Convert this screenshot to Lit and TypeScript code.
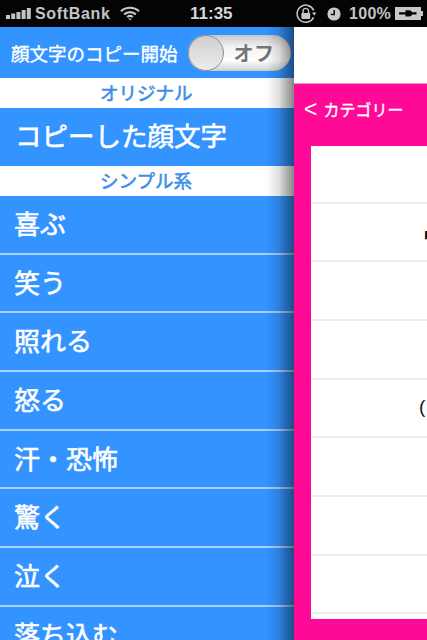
import { LitElement, html, css } from "lit";
import { customElement } from "lit/decorators.js";

const FONT = css`"Noto Sans CJK JP", "Liberation Sans", sans-serif`;

@customElement("app-root")
export class AppRoot extends LitElement {
  static styles = css`
    :host { display: block; width: 427px; height: 640px; overflow: hidden; background: #000; font-family: "Liberation Sans", ${FONT}; }
    .status { height: 27px; background: #040404; display: flex; align-items: center; color: #c4c4c4; font-weight: 700; position: relative; }
    .left-status { display: flex; align-items: center; padding-left: 6px; width: 190px; box-sizing: border-box; }
    .carrier { font-size: 16px; margin-left: 4px; letter-spacing: 0.65px; }
    .wifi { margin-left: 10px; }
    .time { font-size: 17px; width: 105px; color: #d6d6d6; }
    .right-status { display: flex; align-items: center; }
    .clock { margin-left: 10px; }
    .pct { font-size: 16px; margin-left: 8px; letter-spacing: 0.3px; }
    .batt { margin-left: 4px; }
    .main { display: flex; height: 613px; position: relative; }
    .side { width: 294px; flex: none; background: #3393ff; position: relative; overflow: hidden; font-family: ${FONT}; }
    .shade { position: absolute; top: 0; right: 0; bottom: 0; width: 28px; background: linear-gradient(to right, rgba(0,0,0,0), rgba(0,0,0,0.12) 45%, rgba(0,0,0,0.48)); }
    .head { height: 51px; display: flex; align-items: center; padding-left: 11px; color: #fff; font-size: 18.5px; font-weight: 400; -webkit-text-stroke: 0.4px #fff; gap: 10px; white-space: nowrap; }
    .toggle { width: 103px; height: 36px; flex: none; box-sizing: border-box; border-radius: 18px; background: linear-gradient(#c9c9c9, #f4f4f4 35%, #fff 70%, #cfcfcf); display: flex; align-items: center; box-shadow: inset 0 0 1px #888; -webkit-text-stroke: 0; }
    .knob { width: 36px; height: 36px; flex: none; box-sizing: border-box; border-radius: 50%; border: 1px solid #8f8f8f; background: linear-gradient(#cfcfcf, #ececec); }
    .off { color: #757575; font-size: 20px; font-weight: 700; margin-left: 10px; letter-spacing: 0.5px; }
    .section { height: 30px; background: #fff; color: #3a8fe8; font-size: 18.5px; font-weight: 400; -webkit-text-stroke: 0.55px #3a8fe8; line-height: 29px; padding-left: 100px; white-space: nowrap; }
    .copied { height: 58px; padding-left: 15px; color: #fff; font-size: 26.5px; font-weight: 400; -webkit-text-stroke: 0.6px #fff; line-height: 54px; white-space: nowrap; }
    .cat { height: 58.67px; box-sizing: border-box; padding-left: 14px; border-bottom: 2px solid #a9d1fc; color: #fff; font-size: 26px; font-weight: 400; -webkit-text-stroke: 0.6px #fff; line-height: 54px; white-space: nowrap; }
    .panel { flex: 1; background: #fff; min-width: 0; display: flex; flex-direction: column; }
    .top { height: 57px; box-sizing: border-box; border-bottom: 1px solid #d8a0c4; flex: none; }
    .pink { flex: 1; background: #ff0a96; display: flex; flex-direction: column; font-family: ${FONT}; min-height: 0; }
    .back { height: 62px; flex: none; box-sizing: border-box; padding: 12px 0 0 10px; color: #fff; font-size: 16px; font-weight: 400; -webkit-text-stroke: 0.35px #fff; line-height: 26px; white-space: nowrap; display: flex; gap: 6px; }
    .chev { font-size: 23px; font-weight: 400; font-family: "Liberation Sans", sans-serif; line-height: 26px; -webkit-text-stroke: 0; }
    .card { height: 473px; flex: none; margin-left: 17px; background: #fff; overflow: hidden; }
    .row { height: 58.67px; box-sizing: border-box; border-bottom: 2px solid #ececec; white-space: nowrap; color: #111; overflow: hidden; }
    .row:first-child { height: 57.67px; }
    .dark { font-family: "DejaVu Sans", sans-serif; font-size: 11px; line-height: 62px; padding-left: 113px; color: #111; }
    .paren { font-family: "Liberation Sans", sans-serif; font-size: 19px; line-height: 54px; padding-left: 108px; }
  `;

  render() {
    const cats = ["喜ぶ", "笑う", "照れる", "怒る", "汗・恐怖", "驚く", "泣く", "落ち込む"];
    return html`
      <div class="status">
        <div class="left-status">
          <svg width="25" height="12" viewBox="0 0 25 12" fill="#c4c4c4">
            <rect x="0" y="7" width="4" height="4"/><rect x="5.2" y="5.5" width="4" height="5.5"/><rect x="10.4" y="4" width="4" height="7"/><rect x="15.6" y="2" width="4" height="9"/><rect x="20.8" y="0" width="4" height="11"/>
          </svg>
          <span class="carrier">SoftBank</span>
          <svg class="wifi" width="20" height="15" viewBox="0 0 20 15" fill="none" stroke="#c8c8c8" stroke-width="2.2">
            <path d="M1 5.2C6 .6 14 .6 19 5.2"/><path d="M4.2 8.4c3.3-3 8.3-3 11.6 0"/><path d="M7.2 11c1.7-1.4 3.9-1.4 5.6 0"/><path d="M10 14.6l-1.8-2.2h3.6z" fill="#c8c8c8" stroke="none"/>
          </svg>
        </div>
        <span class="time">11:35</span>
        <div class="right-status">
          <svg width="22" height="22" viewBox="0 0 22 22" fill="none">
            <path d="M18.6 14.2A8.6 8.6 0 1 1 18.7 7.5" stroke="#c8c8c8" stroke-width="1.5"/>
            <path d="M17 9.5h4.4l-2.2 3z" fill="#c8c8c8"/>
            <path d="M8 10V8.2a2.8 2.8 0 0 1 5.6 0V10" stroke="#c8c8c8" stroke-width="1.4"/>
            <rect x="6.4" y="10" width="8.8" height="6" rx="0.8" fill="#c8c8c8"/>
          </svg>
          <svg class="clock" width="14" height="14" viewBox="0 0 14 14">
            <circle cx="7" cy="7" r="6.6" fill="#c8c8c8"/><path d="M7.2 3v4.4H3.8" fill="none" stroke="#040404" stroke-width="1.5"/>
          </svg>
          <span class="pct">100%</span>
          <svg class="batt" width="28" height="13" viewBox="0 0 28 13">
            <rect x="0" y="0" width="26" height="13" fill="#c8c8c8"/><rect x="26" y="4" width="2" height="5" fill="#c8c8c8"/>
            <path d="M4 5.2h6.5V3.2h3.6c1.6 0 2.6 1 3 2h4.4v2.4h-4.4c-.4 1-1.4 2-3 2h-3.6v-2H4z" fill="#040404"/>
          </svg>
        </div>
      </div>
      <div class="main">
        <div class="side">
          <div class="head">顔文字のコピー開始
            <div class="toggle"><div class="knob"></div><span class="off">オフ</span></div>
          </div>
          <div class="section">オリジナル</div>
          <div class="copied">コピーした顔文字</div>
          <div class="section">シンプル系</div>
          ${cats.map((c) => html`<div class="cat">${c}</div>`)}
          <div class="shade"></div>
        </div>
        <div class="panel">
          <div class="top"></div>
          <div class="pink">
            <div class="back"><span class="chev">&lt;</span><span>カテゴリー</span></div>
            <div class="card">
              <div class="row"></div>
              <div class="row dark">■</div>
              <div class="row"></div>
              <div class="row"></div>
              <div class="row paren">(</div>
              <div class="row"></div>
              <div class="row"></div>
              <div class="row"></div>
            </div>
          </div>
        </div>
      </div>
    `;
  }
}
